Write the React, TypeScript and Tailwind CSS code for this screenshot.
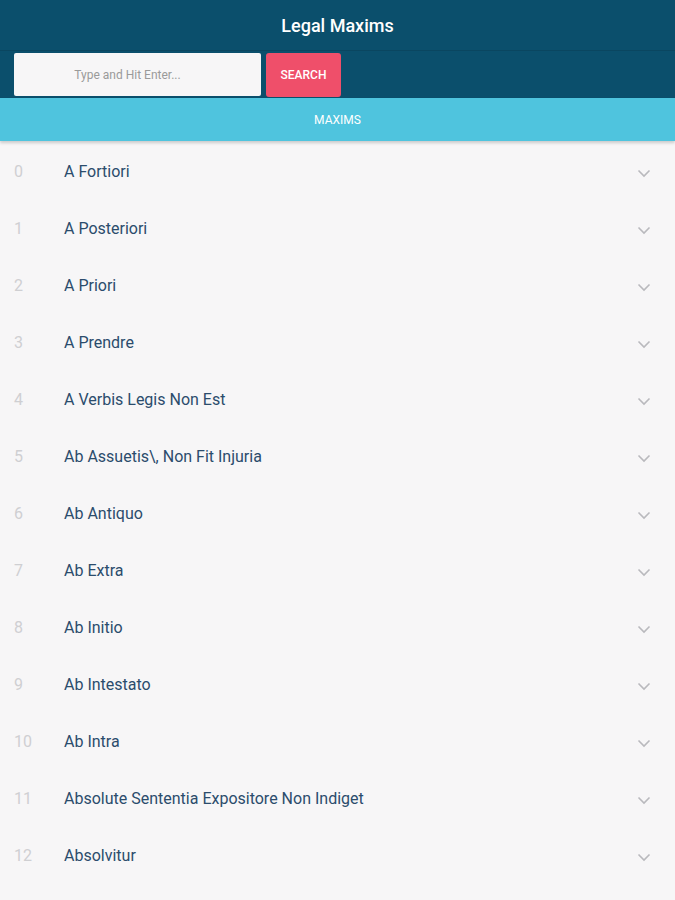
import React from "react";

const items = [
  "A Fortiori",
  "A Posteriori",
  "A Priori",
  "A Prendre",
  "A Verbis Legis Non Est",
  "Ab Assuetis\\, Non Fit Injuria",
  "Ab Antiquo",
  "Ab Extra",
  "Ab Initio",
  "Ab Intestato",
  "Ab Intra",
  "Absolute Sententia Expositore Non Indiget",
  "Absolvitur",
];

function Chevron() {
  return (
    <svg width="14" height="9" viewBox="0 0 14 9" fill="none">
      <path d="M1.5 1.5 L7 7 L12.5 1.5" stroke="#b9b9bd" strokeWidth="1.6" />
    </svg>
  );
}

export default function App() {
  return (
    <div
      className="w-[675px] h-[900px] overflow-hidden bg-[#f7f6f7]"
      style={{ fontFamily: "Roboto, 'Liberation Sans', sans-serif" }}
    >
      <div className="bg-[#0b4f6c]">
        <div className="h-[50px] flex items-center justify-center text-white text-[18px] font-medium">
          Legal Maxims
        </div>
        <div className="h-px bg-[#0a4660]" />
        <div className="h-[47px] flex items-start pt-[2px] pl-[14px] gap-[5px]">
          <div className="w-[247px] h-[43px] bg-[#f7f6f7] rounded-[2px] flex items-center justify-center text-[12px] text-[#9a9a9a] pr-[20px]">
            Type and Hit Enter...
          </div>
          <div className="w-[75px] h-[44px] bg-[#ef4f6a] rounded-[3px] flex items-center justify-center text-white text-[12px] font-medium">
            SEARCH
          </div>
        </div>
      </div>
      <div className="h-[43px] bg-[#4fc4de] flex items-center justify-center text-white text-[12px] shadow-[0_2px_3px_rgba(0,0,0,0.18)] relative">
        MAXIMS
      </div>
      <div className="pt-[2px]">
        {items.map((t, i) => (
          <div key={i} className="h-[57px] flex items-center">
            <div className="w-[64px] pl-[14px] text-[16px] text-[#cfcfd2]">{i}</div>
            <div className="flex-1 text-[16px] text-[#2b4c6c]">{t}</div>
            <div className="w-[40px] flex justify-start pl-[2px] pt-[4px]">
              <Chevron />
            </div>
          </div>
        ))}
      </div>
    </div>
  );
}
